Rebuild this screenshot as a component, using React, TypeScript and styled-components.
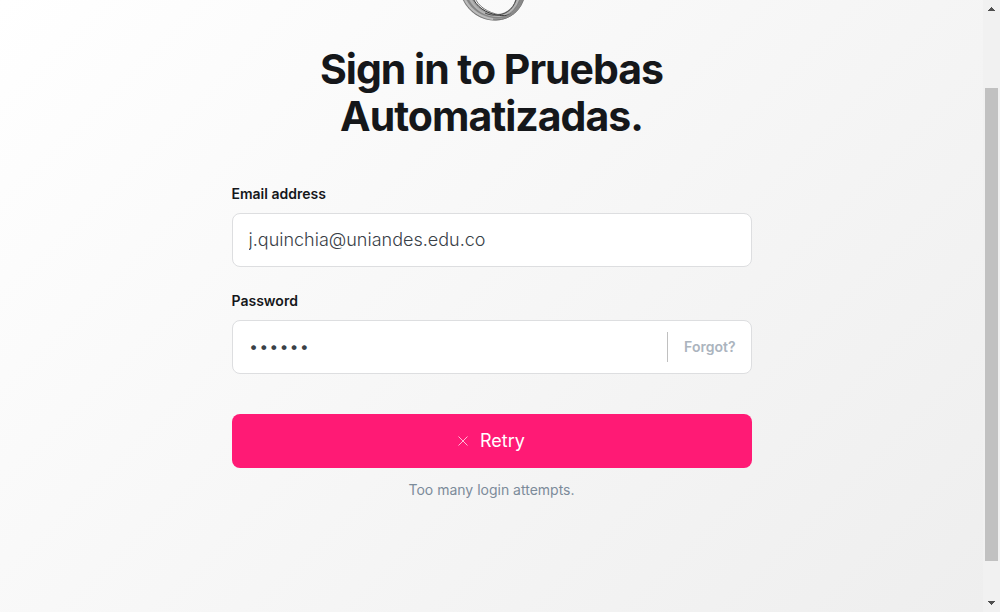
import React from 'react';
import styled, { createGlobalStyle } from 'styled-components';

const GlobalStyle = createGlobalStyle`
  *, *::before, *::after { box-sizing: border-box; }
  body {
    margin: 0;
    font-family: Inter, "Liberation Sans", sans-serif;
    color: #15171a;
  }
`;

const Page = styled.div`
  display: flex;
  height: 100vh;
`;

const Content = styled.main`
  flex: 1;
  min-width: 0;
  overflow: hidden;
  padding: 0 16px;
  background: linear-gradient(135deg, #ffffff, #eeeeee);
`;

const Form = styled.form`
  display: flex;
  flex-direction: column;
  width: 100%;
  max-width: 520px;
  margin: 0 auto;
`;

const LogoFrame = styled.header`
  display: flex;
  justify-content: center;
  align-items: flex-end;
  height: 22px;
`;

const Title = styled.h1`
  margin: 24px 0 44px;
  font-size: 41px;
  line-height: 47px;
  font-weight: 700;
  letter-spacing: -1px;
  text-align: center;
`;

const Field = styled.div`
  display: flex;
  flex-direction: column;
  gap: 9px;
  margin-bottom: 24px;
`;

const Label = styled.label`
  font-size: 14px;
  line-height: 20px;
  font-weight: 600;
`;

const Control = styled.div`
  display: flex;
  align-items: center;
  height: 54px;
  padding: 0 15px 0 16px;
  border: 1px solid #dddee0;
  border-radius: 8px;
  background: #fff;
`;

const Input = styled.input`
  flex: 1;
  min-width: 0;
  height: 100%;
  padding: 0 0 2px;
  border: 0;
  outline: 0;
  background: transparent;
  color: #394047;
  font: 300 18px Inter, "Liberation Sans", sans-serif;
`;

const Forgot = styled.button`
  height: 30px;
  padding: 0 0 2px 16px;
  border: 0;
  border-left: 1px solid #c0c0c0;
  background: transparent;
  color: #abb4be;
  font: 600 14px Inter, "Liberation Sans", sans-serif;
`;

const Retry = styled.button`
  display: flex;
  align-items: center;
  justify-content: center;
  gap: 12px;
  height: 54px;
  margin-top: 16px;
  padding: 0 0 2px;
  border: 0;
  border-radius: 8px;
  background: #ff1a75;
  color: #fff;
  font: 400 18px Inter, "Liberation Sans", sans-serif;
`;

const Message = styled.p`
  margin: 12px 0 0;
  color: #7c8b9a;
  font-size: 14px;
  line-height: 20px;
  font-weight: 400;
  text-align: center;
`;

const Scrollbar = styled.div`
  display: flex;
  flex-direction: column;
  align-items: center;
  width: 17px;
  padding: 7px 2px;
  background: #f1f1f1;
`;

const Track = styled.div`
  display: flex;
  flex-direction: column;
  flex: 1;
  width: 100%;
  padding: 77px 0 40px;
`;

const Thumb = styled.div`
  flex: 1;
  background: #c1c1c1;
`;

const Logo = () => (
  <svg width="70" height="22" viewBox="0 44 70 22" fill="none" aria-hidden="true">
    <path d="M4 40C10 56 24 65 39 64.500C54 64 65 54 68 40H59C58 50 51 57.500 40 58C28 57 19 50 15 40Z" fill="#a0a0a0" />
    <path d="M5 40C11 56 24 64 39 64C54 63.500 64 54 67.500 40" stroke="#747474" />
    <path d="M9 40C14 53 26 60 40 61.500C52 61 62 51 64 40" stroke="#858585" strokeWidth="2" />
    <path d="M12 40C17 53 28 60 42 60C53 59 60 50 62 40" stroke="#b4b4b4" strokeWidth="2" />
    <path d="M15 40C19 51 29 57 40 59C46 60 50 60 54 58" stroke="#3c3c3c" />
    <path d="M17 40C21 51 31 56.500 43 59" stroke="#777" />
    <path d="M60 40C58 51 51 58 41 59C36 59.500 32 59 28 57" stroke="#4a4a4a" />
    <path d="M8 44C14 55 25 62 36 63" stroke="#bcbcbc" strokeWidth="2" />
    <path d="M65 44C62 53 55 60 45 62" stroke="#888" strokeWidth="2" />
  </svg>
);

const Arrow = ({ down = false }: { down?: boolean }) => (
  <svg width="7" height="4" viewBox="0 0 7 4" fill="#505050" aria-hidden="true">
    <path d={down ? 'M0 0h7v1H6v1H5v1H4v1H3V3H2V2H1V1H0Z' : 'M3 0h1v1h1v1h1v1h1v1H0V3h1V2h1V1h1Z'} />
  </svg>
);

export default function App() {
  return (
    <Page>
      <GlobalStyle />
      <Content>
        <Form onSubmit={(event) => event.preventDefault()}>
          <LogoFrame><Logo /></LogoFrame>
          <Title>Sign in to Pruebas Automatizadas.</Title>
          <Field>
            <Label htmlFor="email">Email address</Label>
            <Control>
              <Input id="email" type="email" defaultValue="j.quinchia@uniandes.edu.co" />
            </Control>
          </Field>
          <Field>
            <Label htmlFor="password">Password</Label>
            <Control>
              <Input id="password" type="password" defaultValue="secret" />
              <Forgot type="button">Forgot?</Forgot>
            </Control>
          </Field>
          <Retry type="submit">
            <svg width="10" height="12" viewBox="0 0 10 12" stroke="#fff" strokeOpacity="0.7" aria-hidden="true">
              <path d="M0.5 2.5 9.5 11.5M9.5 2.5 0.5 11.5" />
            </svg>
            Retry
          </Retry>
          <Message role="alert">Too many login attempts.</Message>
        </Form>
      </Content>
      <Scrollbar aria-hidden="true">
        <Arrow />
        <Track><Thumb /></Track>
        <Arrow down />
      </Scrollbar>
    </Page>
  );
}
